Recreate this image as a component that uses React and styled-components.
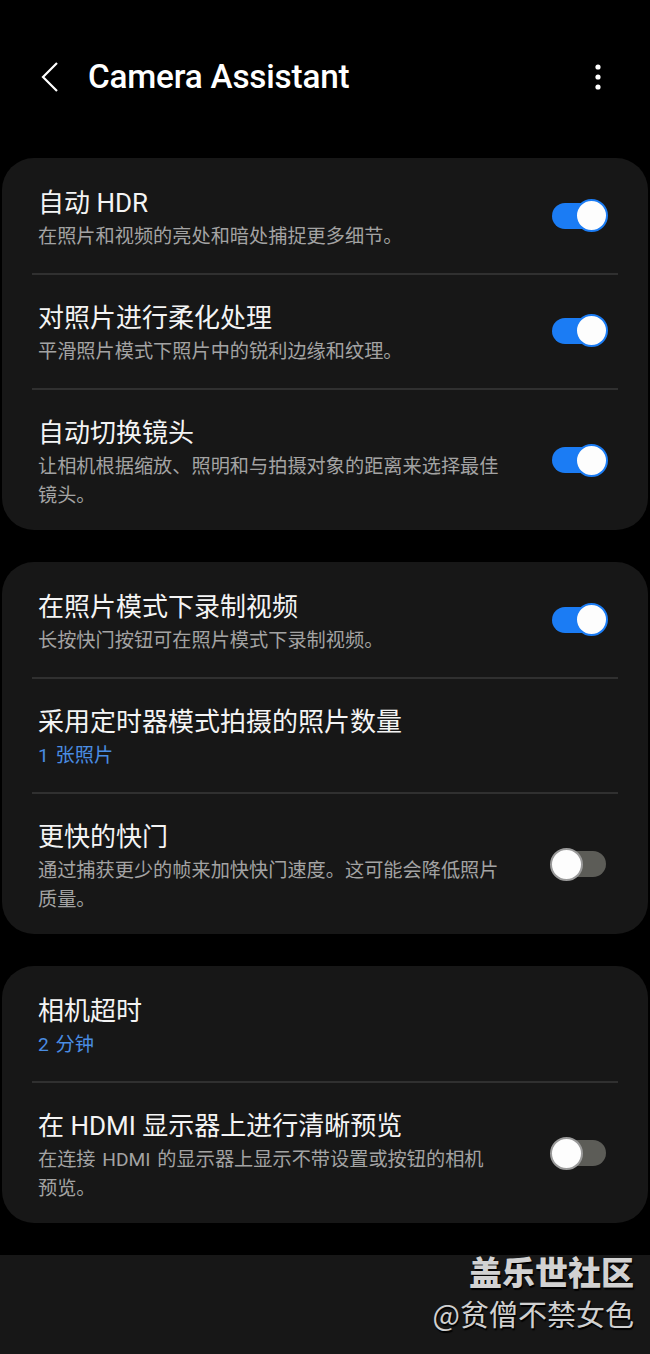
import React from 'react';
import styled, { createGlobalStyle } from 'styled-components';

const GlobalStyle = createGlobalStyle`
  html, body {
    margin: 0;
    padding: 0;
    background: #000;
  }
  body {
    font-family: Roboto, "Noto Sans CJK SC", sans-serif;
    -webkit-font-smoothing: antialiased;
  }
`;

const Page = styled.div`
  width: 650px;
  min-height: 1354px;
  display: flex;
  flex-direction: column;
  background: #000;
`;

const Screen = styled.div`
  height: 1255px;
  display: flex;
  flex-direction: column;
  padding: 0 2px;
  box-sizing: border-box;
`;

const Header = styled.header`
  height: 158px;
  display: flex;
  align-items: flex-start;
  padding-top: 58px;
  box-sizing: border-box;
`;

const BackButton = styled.button`
  width: 86px;
  height: 38px;
  border: none;
  background: none;
  padding: 0 0 0 38px;
  display: flex;
  align-items: center;
`;

const Title = styled.h1`
  flex: 1;
  margin: 0;
  color: #fff;
  font-family: Roboto, sans-serif;
  font-size: 33.3px;
  font-weight: 500;
  line-height: 38px;
  letter-spacing: -0.2px;
`;

const MoreButton = styled.button`
  width: 40px;
  height: 38px;
  margin-right: 30px;
  border: none;
  background: none;
  padding: 0;
  display: flex;
  align-items: center;
  justify-content: center;
`;

const List = styled.div`
  display: flex;
  flex-direction: column;
  gap: 32px;
`;

const Card = styled.section`
  background: #171717;
  border-radius: 32px;
  padding: 0 30px;
`;

const Row = styled.div`
  display: flex;
  align-items: center;
  justify-content: space-between;
  padding: ${(p) => (p.$first ? '28px' : '26px')} 10px ${(p) => (p.$long ? '20px' : '22px')} 6px;
  border-top: ${(p) => (p.$first ? 'none' : '2px solid #303030')};
`;

const Texts = styled.div`
  flex: 1;
  max-width: 464px;
  min-width: 0;
`;

const RowTitle = styled.div`
  color: #f4f4f4;
  font-size: 26px;
  line-height: 34px;
`;

const RowSub = styled.div`
  margin-top: 2px;
  color: ${(p) => (p.$accent ? '#4a8de3' : '#a3a3a3')};
  font-size: 19.2px;
  line-height: 29px;
  word-spacing: 2px;
`;

const Switch = styled.div`
  position: relative;
  width: 58px;
  height: 33px;
  margin-top: -6px;
  flex-shrink: 0;
`;

const Track = styled.div`
  position: absolute;
  left: 2px;
  right: 2px;
  top: 3.5px;
  height: 26px;
  border-radius: 13px;
  background: ${(p) => (p.$on ? '#1b7cf4' : '#5c5c57')};
`;

const Thumb = styled.div`
  position: absolute;
  top: 0;
  ${(p) => (p.$on ? 'right: 0;' : 'left: 0;')}
  width: 33px;
  height: 33px;
  box-sizing: border-box;
  border-radius: 50%;
  background: #fdfdfd;
  border: 2px solid ${(p) => (p.$on ? '#1b7cf4' : '#9a9a9a')};
`;

const Watermark = styled.div`
  flex: 1;
  background: #171717;
  display: flex;
  flex-direction: column;
  align-items: flex-end;
  padding: 0 16px 0 0;
`;

const MarkBrand = styled.div`
  color: #d2d2d2;
  font-family: "Noto Sans CJK SC", sans-serif;
  font-weight: 900;
  font-size: 33px;
  line-height: 36px;
  margin-top: -2px;
  text-shadow: 1px 2px 1px #000;
`;

const MarkUser = styled.div`
  color: #d0d0d0;
  font-family: "Noto Sans CJK SC", sans-serif;
  font-size: 29px;
  line-height: 40px;
  margin-top: 4px;
  text-shadow: 1px 2px 1px #000;
`;

const Toggle = ({ on }) => (
  <Switch>
    <Track $on={on} />
    <Thumb $on={on} />
  </Switch>
);

const groups = [
  [
    { title: '自动 HDR', sub: '在照片和视频的亮处和暗处捕捉更多细节。', toggle: true },
    { title: '对照片进行柔化处理', sub: '平滑照片模式下照片中的锐利边缘和纹理。', toggle: true },
    { title: '自动切换镜头', sub: '让相机根据缩放、照明和与拍摄对象的距离来选择最佳镜头。', toggle: true, long: true },
  ],
  [
    { title: '在照片模式下录制视频', sub: '长按快门按钮可在照片模式下录制视频。', toggle: true },
    { title: '采用定时器模式拍摄的照片数量', sub: '1 张照片', accent: true },
    { title: '更快的快门', sub: '通过捕获更少的帧来加快快门速度。这可能会降低照片质量。', toggle: false, long: true },
  ],
  [
    { title: '相机超时', sub: '2 分钟', accent: true },
    { title: '在 HDMI 显示器上进行清晰预览', sub: '在连接 HDMI 的显示器上显示不带设置或按钮的相机预览。', toggle: false, long: true },
  ],
];

export default function App() {
  return (
    <Page>
      <GlobalStyle />
      <Screen>
        <Header>
          <BackButton>
            <svg width="20" height="32" viewBox="0 0 20 32">
              <path d="M17 2 L3 16 L17 30" fill="none" stroke="#fff" strokeWidth="2.2" />
            </svg>
          </BackButton>
          <Title>Camera Assistant</Title>
          <MoreButton>
            <svg width="8" height="30" viewBox="0 0 8 30">
              <circle cx="4" cy="5" r="2.6" fill="#fff" />
              <circle cx="4" cy="15" r="2.6" fill="#fff" />
              <circle cx="4" cy="25" r="2.6" fill="#fff" />
            </svg>
          </MoreButton>
        </Header>
        <List>
          {groups.map((items, gi) => (
            <Card key={gi}>
              {items.map((it, i) => (
                <Row key={it.title} $first={i === 0} $long={it.long}>
                  <Texts>
                    <RowTitle>{it.title}</RowTitle>
                    <RowSub $accent={it.accent}>{it.sub}</RowSub>
                  </Texts>
                  {it.toggle !== undefined && <Toggle on={it.toggle} />}
                </Row>
              ))}
            </Card>
          ))}
        </List>
      </Screen>
      <Watermark>
        <MarkBrand>盖乐世社区</MarkBrand>
        <MarkUser>@贫僧不禁女色</MarkUser>
      </Watermark>
    </Page>
  );
}
